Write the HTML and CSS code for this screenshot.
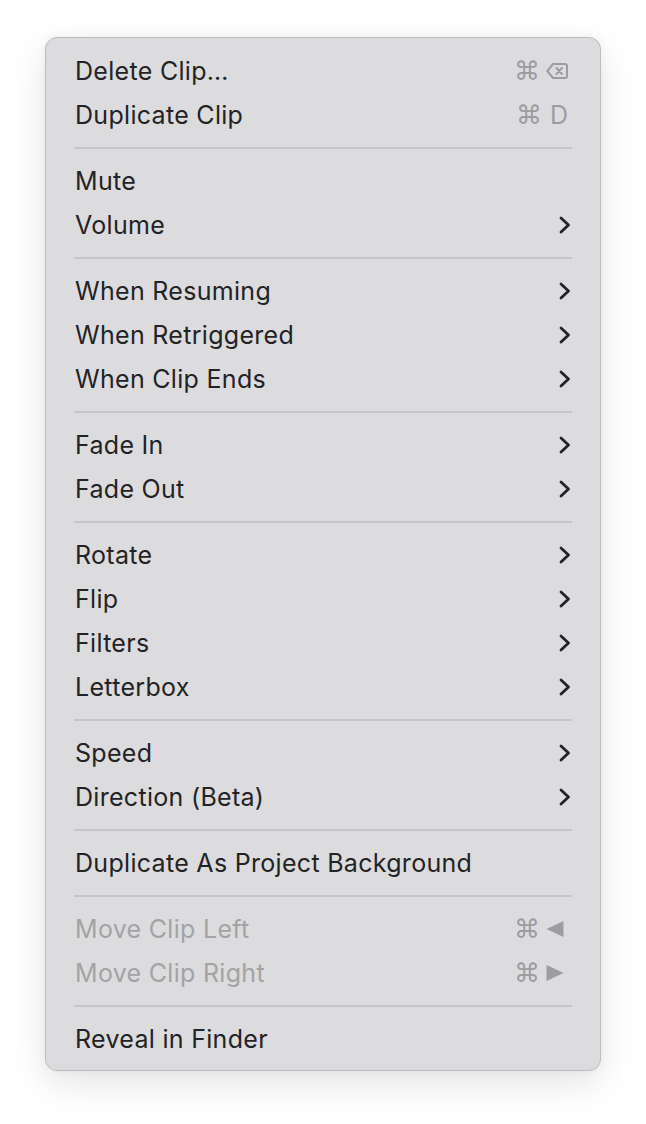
FILE: index.html
```html
<!DOCTYPE html>
<html>
<head>
<meta charset="utf-8">
<link rel="stylesheet" href="styles.css">
</head>
<body>
<div class="menu">
  <div class="item"><span class="label">Delete Clip…</span><span class="keys"><span class="cmd">⌘</span><svg class="del" width="22" height="18" viewBox="0 0 22 18"><path d="M7 2 H19 a2 2 0 0 1 2 2 V14 a2 2 0 0 1 -2 2 H7 L1.3 9 Z" fill="none" stroke="currentColor" stroke-width="2" stroke-linejoin="round"/><path d="M10.5 6 L16 12 M16 6 L10.5 12" stroke="currentColor" stroke-width="2" stroke-linecap="round"/></svg></span></div>
  <div class="item"><span class="label">Duplicate Clip</span><span class="keys"><span class="cmd">⌘</span><span class="key">D</span></span></div>
  <div class="sep"></div>
  <div class="item"><span class="label">Mute</span></div>
  <div class="item sub"><span class="label">Volume</span><svg class="chev" width="12" height="18" viewBox="0 0 12 18"><polyline points="2,2 9.5,9 2,16" /></svg></div>
  <div class="sep"></div>
  <div class="item sub"><span class="label">When Resuming</span><svg class="chev" width="12" height="18" viewBox="0 0 12 18"><polyline points="2,2 9.5,9 2,16" /></svg></div>
  <div class="item sub"><span class="label">When Retriggered</span><svg class="chev" width="12" height="18" viewBox="0 0 12 18"><polyline points="2,2 9.5,9 2,16" /></svg></div>
  <div class="item sub"><span class="label">When Clip Ends</span><svg class="chev" width="12" height="18" viewBox="0 0 12 18"><polyline points="2,2 9.5,9 2,16" /></svg></div>
  <div class="sep"></div>
  <div class="item sub"><span class="label">Fade In</span><svg class="chev" width="12" height="18" viewBox="0 0 12 18"><polyline points="2,2 9.5,9 2,16" /></svg></div>
  <div class="item sub"><span class="label">Fade Out</span><svg class="chev" width="12" height="18" viewBox="0 0 12 18"><polyline points="2,2 9.5,9 2,16" /></svg></div>
  <div class="sep"></div>
  <div class="item sub"><span class="label">Rotate</span><svg class="chev" width="12" height="18" viewBox="0 0 12 18"><polyline points="2,2 9.5,9 2,16" /></svg></div>
  <div class="item sub"><span class="label">Flip</span><svg class="chev" width="12" height="18" viewBox="0 0 12 18"><polyline points="2,2 9.5,9 2,16" /></svg></div>
  <div class="item sub"><span class="label">Filters</span><svg class="chev" width="12" height="18" viewBox="0 0 12 18"><polyline points="2,2 9.5,9 2,16" /></svg></div>
  <div class="item sub"><span class="label">Letterbox</span><svg class="chev" width="12" height="18" viewBox="0 0 12 18"><polyline points="2,2 9.5,9 2,16" /></svg></div>
  <div class="sep"></div>
  <div class="item sub"><span class="label">Speed</span><svg class="chev" width="12" height="18" viewBox="0 0 12 18"><polyline points="2,2 9.5,9 2,16" /></svg></div>
  <div class="item sub"><span class="label">Direction (Beta)</span><svg class="chev" width="12" height="18" viewBox="0 0 12 18"><polyline points="2,2 9.5,9 2,16" /></svg></div>
  <div class="sep"></div>
  <div class="item"><span class="label">Duplicate As Project Background</span></div>
  <div class="sep"></div>
  <div class="item disabled"><span class="label">Move Clip Left</span><span class="keys"><span class="cmd">⌘</span><svg class="tri" width="18" height="18" viewBox="0 0 18 18"><polygon points="17.5,1 17.5,17 0.5,9" /></svg></span></div>
  <div class="item disabled"><span class="label">Move Clip Right</span><span class="keys"><span class="cmd">⌘</span><svg class="tri" width="18" height="18" viewBox="0 0 18 18"><polygon points="0.5,1 0.5,17 17.5,9" /></svg></span></div>
  <div class="sep"></div>
  <div class="item"><span class="label">Reveal in Finder</span></div>
</div>
</body>
</html>
```

FILE: styles.css
```css
html, body {
  margin: 0;
  padding: 0;
  background: #ffffff;
}

html {
  height: 100%;
}

body {
  box-sizing: border-box;
  min-height: 100%;
  padding: 37px 0 0 45px;
  font-family: Inter, "Noto Sans", "DejaVu Sans", sans-serif;
}

.menu {
  box-sizing: border-box;
  width: 556px;
  background: #dcdcde;
  border: 1px solid #bdbdbf;
  border-radius: 12px;
  padding: 11px 0 9px 0;
  display: flex;
  flex-direction: column;
  box-shadow: 0 12px 36px rgba(0, 0, 0, 0.11), 0 0 8px rgba(0, 0, 0, 0.05);
}

.item {
  height: 44px;
  display: flex;
  align-items: center;
  justify-content: space-between;
  padding: 0 32px 0 29px;
  color: #232325;
  font-size: 25px;
  letter-spacing: 0.3px;
}

.label {
  white-space: nowrap;
}

.item.disabled {
  color: #a3a3a5;
}

.keys {
  display: flex;
  align-items: center;
  gap: 6px;
  color: #9d9d9f;
  letter-spacing: 0;
}

.cmd {
  font-family: "DejaVu Sans", sans-serif;
  font-size: 26px;
  line-height: 1;
}

.key {
  font-size: 25px;
  line-height: 1;
  margin-left: 2px;
}

.del {
  display: block;
}

.tri {
  display: block;
  fill: #9d9d9f;
  margin-right: 4px;
}

.chev {
  display: block;
  fill: none;
  stroke: #232325;
  stroke-width: 2.8;
  stroke-linecap: round;
  stroke-linejoin: round;
  margin-right: -3px;
}

.sep {
  height: 22px;
  display: flex;
  align-items: center;
  padding: 0 28px 0 28px;
}

.sep::before {
  content: "";
  display: block;
  flex: 1;
  height: 2px;
  background: #c5c5c7;
}
```
